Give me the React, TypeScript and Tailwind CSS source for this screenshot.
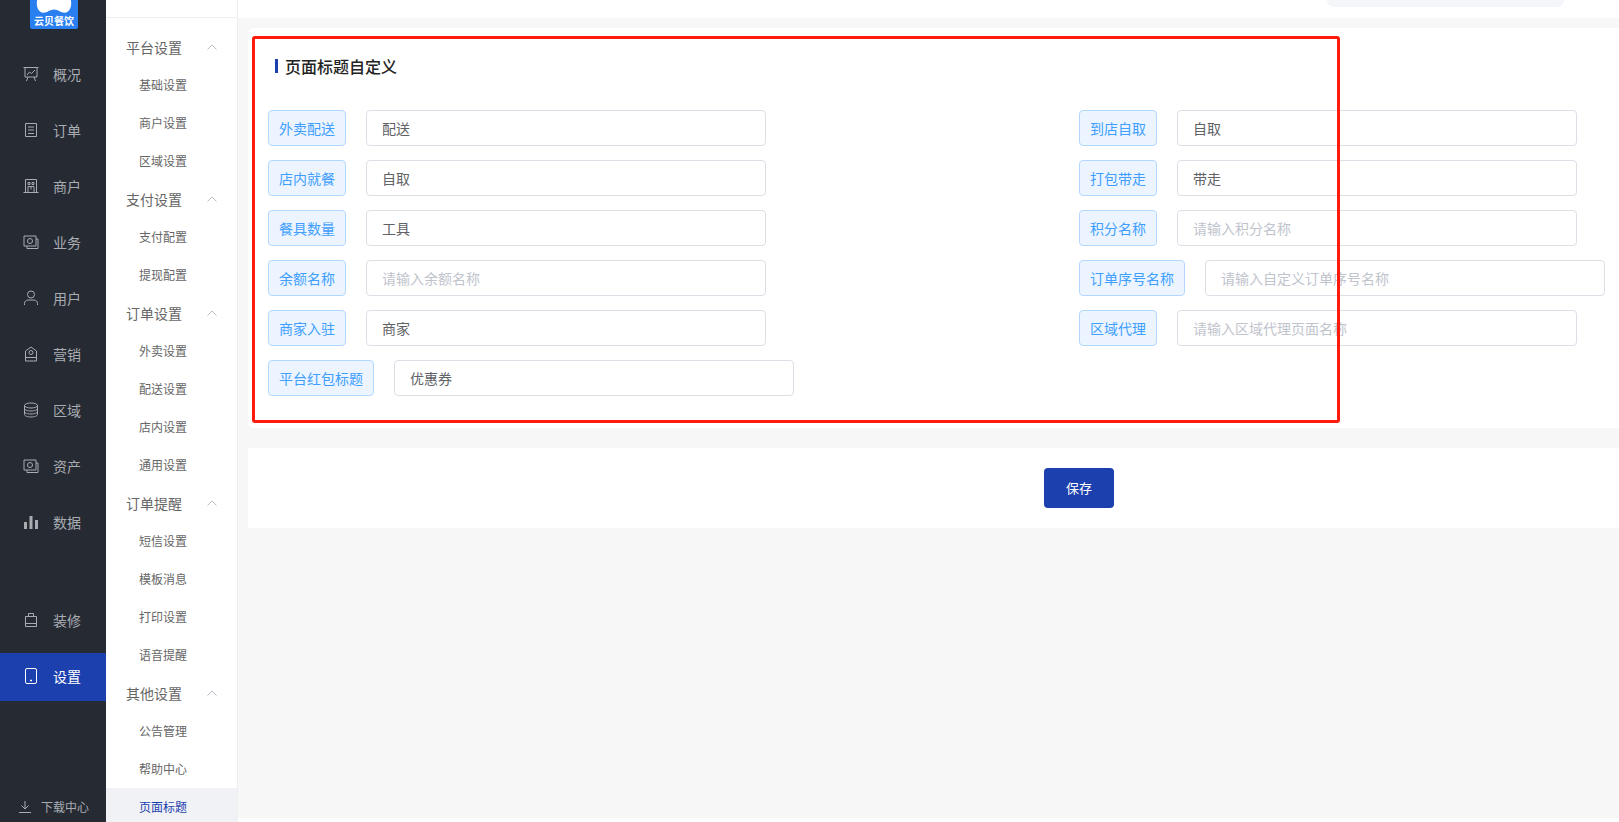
import type { ReactNode } from "react";

const font = { fontFamily: '"Noto Sans CJK SC", "Noto Sans", sans-serif' };

const Ico = ({ children, size = 16 }: { children: ReactNode; size?: number }) => (
  <svg width={size} height={size} viewBox="0 0 16 16" fill="none" stroke="currentColor" strokeWidth="1">
    {children}
  </svg>
);

//main nav icons
const icons: Record<string, ReactNode> = {
  board: (
    <Ico>
      <path d="M0.5 1.5h15M2 1.5v9.5h12V1.5M4 9l2.5-3 2 1.5L12 4M5 11l-1.5 4M11 11l1.500 4" />
    </Ico>
  ),
  order: (
    <Ico>
      <path d="M2.5 1.5h11v13h-11zM5 5h6M5 8h6M5 11.5h6" />
    </Ico>
  ),
  shop: (
    <Ico>
      <path d="M0.5 14.5h15M2.5 14.5v-13h11v13M5 4.5h2v2H5zM9 4.5h2v2H9zM5 8.5h6v6M5 8.5v6M8 8.5v3" />
    </Ico>
  ),
  wallet: (
    <Ico>
      <path d="M1 2h12v10H1zM13 5h2v9.5H4V12" />
      <circle cx="7" cy="7" r="2.5" />
    </Ico>
  ),
  user: (
    <Ico>
      <circle cx="8" cy="4.5" r="3.5" />
      <path d="M1.5 15v-1.5c0-2 1.5-3.5 3.5-3.5h6c2 0 3.5 1.500 3.500 3.500V15" />
    </Ico>
  ),
  tag: (
    <Ico>
      <path d="M2.500 15h11V5L8 1 2.500 5zM2.500 11.500h11" />
      <circle cx="8" cy="6.500" r="2" />
    </Ico>
  ),
  db: (
    <Ico>
      <ellipse cx="8" cy="3.500" rx="6.500" ry="2.500" />
      <path d="M1.500 3.500v9c0 1.400 2.900 2.500 6.500 2.500s6.500-1.100 6.500-2.500v-9M1.500 6.500c0 1.400 2.900 2.500 6.500 2.500s6.500-1.100 6.500-2.500M1.500 9.500c0 1.400 2.900 2.500 6.500 2.500s6.500-1.100 6.500-2.500" />
    </Ico>
  ),
  chart: (
    <Ico>
      <path d="M1 8h3v7H1zM6.500 2h3v13h-3zM12 6h3v9h-3z" fill="currentColor" stroke="none" />
    </Ico>
  ),
  bag: (
    <Ico>
      <path d="M2.500 4.500h11v10h-11zM5.500 4.500V1.500h5v3M2.500 11.500h11" />
    </Ico>
  ),
  phone: (
    <Ico>
      <rect x="2.500" y="0.500" width="11" height="15" rx="1.500" />
      <path d="M7 12.500h2" strokeWidth="1.500" />
    </Ico>
  ),
};

const mainNav = [
  { name: "概况", icon: "board" },
  { name: "订单", icon: "order" },
  { name: "商户", icon: "shop" },
  { name: "业务", icon: "wallet" },
  { name: "用户", icon: "user" },
  { name: "营销", icon: "tag" },
  { name: "区域", icon: "db" },
  { name: "资产", icon: "wallet" },
  { name: "数据", icon: "chart" },
];

const subNav = [
  { title: "平台设置", items: ["基础设置", "商户设置", "区域设置"] },
  { title: "支付设置", items: ["支付配置", "提现配置"] },
  { title: "订单设置", items: ["外卖设置", "配送设置", "店内设置", "通用设置"] },
  { title: "订单提醒", items: ["短信设置", "模板消息", "打印设置", "语音提醒"] },
  { title: "其他设置", items: ["公告管理", "帮助中心", "页面标题"] },
];

const NavItem = ({ name, icon, active }: { name: string; icon: string; active?: boolean }) => (
  <div className={`flex h-[48px] items-center gap-[14px] pl-[23px] text-sm ${active ? "bg-[#1c40ad] pb-[2px] text-white" : "text-[#a9acb1]"}`}>
    {icons[icon]}
    <span>{name}</span>
  </div>
);

const Field = ({ label, value, placeholder }: { label: string; value?: string; placeholder?: string }) => (
  <div className="flex h-[36px] items-center gap-[20px]">
    <div className="flex h-[36px] items-center whitespace-nowrap rounded border border-[#b3d8ff] bg-[#ecf5ff] px-[10px] pb-[1px] text-sm text-[#409eff]">
      {label}
    </div>
    <div className="flex h-[36px] w-[400px] items-center whitespace-nowrap rounded border border-[#dcdfe6] bg-white px-[15px] pb-[1px] text-sm">
      {value ? <span className="text-[#606266]">{value}</span> : <span className="text-[#c0c4cc]">{placeholder}</span>}
    </div>
  </div>
);

export default function App() {
  return (
    <div className="flex h-screen overflow-hidden bg-white" style={font}>
      {/* dark nav */}
      <aside className="flex w-[106px] shrink-0 flex-col bg-[#252a33]">
        <div className="ml-[30px] flex h-[29px] w-[48px] flex-col items-center overflow-hidden rounded-b-[2px] bg-[#2a7ff0]">
          <svg width="36" height="15" viewBox="0 0 34 14" className="shrink-0">
            <path d="M1 0h32c1 6-1 12-6 12-4 0-6-3-10-3S11 12 7 12C2 12 0 6 1 0z" fill="#fff" />
          </svg>
          <span className="whitespace-nowrap text-[10px] font-bold leading-[12px] text-white">云贝餐饮</span>
        </div>
        <div className="mt-[21px] flex flex-col gap-[8px]">
          {mainNav.map((n) => (
            <NavItem key={n.name} name={n.name} icon={n.icon} />
          ))}
        </div>
        <div className="mt-[50px] flex flex-col">
          <NavItem name="装修" icon="bag" />
          <div className="h-[9px]" />
          <NavItem name="设置" icon="phone" active />
        </div>
        <div className="mt-auto flex h-[30px] items-center gap-[10px] pl-[19px] text-xs text-[#a9acb1]">
          <svg width="12" height="12" viewBox="0 0 12 12" fill="none" stroke="currentColor">
            <path d="M6 0v8M2.500 4.500 6 8l3.500-3.500M0 11.500h12" />
          </svg>
          <span>下载中心</span>
        </div>
      </aside>

      {/* second nav */}
      <aside className="w-[132px] shrink-0 border-r border-[#eeeeee] bg-white">
        <div className="h-[18px] border-b border-[#eeeeee]" />
        <div className="mt-[10px]">
          {subNav.map((g) => (
            <div key={g.title}>
              <div className="flex h-[38px] items-center justify-between pl-[20px] pr-[20px] text-sm text-[#666666]">
                <span>{g.title}</span>
                <svg width="10" height="6" viewBox="0 0 10 6" fill="none" stroke="#b9bcc4">
                  <path d="M0.500 5.500 5 1l4.500 4.500" />
                </svg>
              </div>
              {g.items.map((it) => (
                <div
                  key={it}
                  className={`flex h-[38px] items-center pl-[33px] text-xs ${it === "页面标题" ? "bg-[#f1f2f6] text-[#1c40ad]" : "text-[#666666]"}`}
                >
                  {it}
                </div>
              ))}
            </div>
          ))}
        </div>
      </aside>

      {/* main */}
      <main className="relative flex h-[818px] min-w-0 flex-1 flex-col bg-[#f7f7f7]">
        <div className="flex h-[18px] shrink-0 justify-end bg-white pr-[55px]">
          <div className="h-[7px] w-[237px] rounded-b-[10px] bg-[#f5f6fa]" />
        </div>
        <div className="pl-[10px] pt-[10px]">
          <section className="relative h-[400px] rounded-l-md bg-white pl-[20px]">
            <div className="flex h-[82px] items-start pl-[7px] pt-[26px]">
              <div className="flex h-[24px] items-center gap-[7px]">
                <div className="h-[14px] w-[3px] bg-[#1c40ad]" />
                <h2 className="text-[16px] font-medium text-[#222222]">页面标题自定义</h2>
              </div>
            </div>
            <div className="grid grid-cols-[811px_1fr] gap-y-[14px]">
              <Field label="外卖配送" value="配送" />
              <Field label="到店自取" value="自取" />
              <Field label="店内就餐" value="自取" />
              <Field label="打包带走" value="带走" />
              <Field label="餐具数量" value="工具" />
              <Field label="积分名称" placeholder="请输入积分名称" />
              <Field label="余额名称" placeholder="请输入余额名称" />
              <Field label="订单序号名称" placeholder="请输入自定义订单序号名称" />
              <Field label="商家入驻" value="商家" />
              <Field label="区域代理" placeholder="请输入区域代理页面名称" />
              <Field label="平台红包标题" value="优惠券" />
            </div>
            {/* annotation box */}
            <div className="pointer-events-none absolute left-[4px] top-[8px] h-[387px] w-[1088px] rounded-[3px] border-[3px] border-[#ff1a0e]" />
          </section>
          <section className="mt-[20px] flex h-[80px] items-center bg-white pl-[796px]">
            <button className="h-[40px] w-[70px] rounded bg-[#1c40ad] text-[13px] text-white">保存</button>
          </section>
        </div>
      </main>
    </div>
  );
}
